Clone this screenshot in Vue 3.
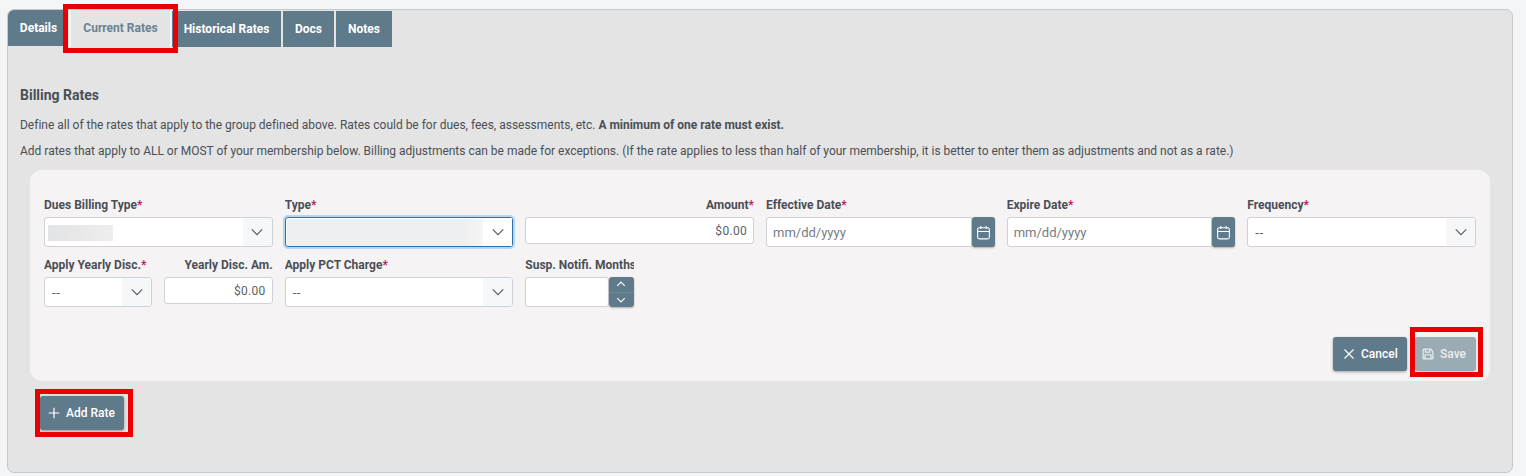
<script setup>
const tabs = [
  { name: 'Details', cls: 'first' },
  { name: 'Current Rates', cls: 'active' },
  { name: 'Historical Rates', cls: '' },
  { name: 'Docs', cls: '' },
  { name: 'Notes', cls: '' },
]
</script>

<template>
  <div class="page">
    <div class="panel">
      <div class="tabs">
        <div v-for="t in tabs" :key="t.name" class="tab" :class="t.cls">{{ t.name }}</div>
      </div>
      <div class="content">
        <h2 class="title">Billing Rates</h2>
        <p class="line one">Define all of the rates that apply to the group defined above. Rates could be for dues, fees, assessments, etc. <b>A minimum of one rate must exist.</b></p>
        <p class="line two">Add rates that apply to ALL or MOST of your membership below. Billing adjustments can be made for exceptions. (If the rate applies to less than half of your membership, it is better to enter them as adjustments and not as a rate.)</p>

        <div class="card">
          <div class="grid">
            <div class="field s2">
              <label>Dues Billing Type<i>*</i></label>
              <div class="select">
                <span class="value"><span class="blur small"></span></span>
                <span class="arrow"><svg viewBox="0 0 16 16"><path d="M2 5l6 6 6-6" /></svg></span>
              </div>
            </div>
            <div class="field s2">
              <label>Type<i>*</i></label>
              <div class="select focus">
                <span class="value nopad"><span class="blur full"></span></span>
                <span class="arrow white"><svg viewBox="0 0 16 16"><path d="M2 5l6 6 6-6" /></svg></span>
              </div>
            </div>
            <div class="field s2">
              <label class="right">Amount<i>*</i></label>
              <div class="input money">$0.00</div>
            </div>
            <div class="field s2">
              <label>Effective Date<i>*</i></label>
              <div class="date">
                <div class="input ph">mm/dd/yyyy</div>
                <span class="icon-btn">
                  <svg viewBox="0 0 16 16"><rect x="2.5" y="3.5" width="11" height="10.5" rx="1.5" /><path d="M2.5 7h11M5.5 1.8v3M10.5 1.8v3" /></svg>
                </span>
              </div>
            </div>
            <div class="field s2">
              <label>Expire Date<i>*</i></label>
              <div class="date">
                <div class="input ph">mm/dd/yyyy</div>
                <span class="icon-btn">
                  <svg viewBox="0 0 16 16"><rect x="2.5" y="3.5" width="11" height="10.5" rx="1.5" /><path d="M2.5 7h11M5.5 1.8v3M10.5 1.8v3" /></svg>
                </span>
              </div>
            </div>
            <div class="field s2">
              <label>Frequency<i>*</i></label>
              <div class="select">
                <span class="value">--</span>
                <span class="arrow"><svg viewBox="0 0 16 16"><path d="M2 5l6 6 6-6" /></svg></span>
              </div>
            </div>

            <div class="field">
              <label>Apply Yearly Disc.<i>*</i></label>
              <div class="select">
                <span class="value">--</span>
                <span class="arrow"><svg viewBox="0 0 16 16"><path d="M2 5l6 6 6-6" /></svg></span>
              </div>
            </div>
            <div class="field">
              <label class="right">Yearly Disc. Am.</label>
              <div class="input money">$0.00</div>
            </div>
            <div class="field s2">
              <label>Apply PCT Charge<i>*</i></label>
              <div class="select">
                <span class="value">--</span>
                <span class="arrow"><svg viewBox="0 0 16 16"><path d="M2 5l6 6 6-6" /></svg></span>
              </div>
            </div>
            <div class="field">
              <label>Susp. Notifi. Months</label>
              <div class="date">
                <div class="input"></div>
                <span class="stepper">
                  <span class="step"><svg viewBox="0 0 16 16"><path d="M3 10.5l5-5 5 5" /></svg></span>
                  <span class="step"><svg viewBox="0 0 16 16"><path d="M3 5.5l5 5 5-5" /></svg></span>
                </span>
              </div>
            </div>
          </div>

          <div class="actions">
            <button class="btn cancel">
              <svg viewBox="0 0 16 16"><path d="M2 2l12 12M14 2L2 14" /></svg>
              Cancel
            </button>
            <button class="btn save">
              <svg viewBox="0 0 16 16"><path d="M1.5 2.5a1 1 0 0 1 1-1h9l3 3v9a1 1 0 0 1-1 1h-11a1 1 0 0 1-1-1zM4.5 1.5v4h6v-4M4 14.5v-5.5h8v5.5" /></svg>
              Save
            </button>
          </div>
        </div>

        <button class="btn add">
          <svg viewBox="0 0 16 16"><path d="M8 1v14M1 8h14" /></svg>
          Add Rate
        </button>
      </div>
    </div>

    <div class="mark mark-tab"></div>
    <div class="mark mark-save"></div>
    <div class="mark mark-add"></div>
  </div>
</template>

<style scoped>
.page {
  position: relative;
  width: 1526px;
  height: 476px;
  box-sizing: border-box;
  padding: 9px 13px 3px 7px;
  background: #f4f5f7;
  font-family: Roboto, "Liberation Sans", sans-serif;
  font-size: 12px;
  color: #4a4f57;
  overflow: hidden;
}
.panel {
  box-sizing: border-box;
  height: 464px;
  background: #e4e4e4;
  border: 1px solid #c9c9c9;
  border-radius: 7px;
}
.tabs {
  display: flex;
  align-items: flex-start;
  height: 37px;
}
.tab {
  box-sizing: border-box;
  height: 36px;
  margin-top: 1px;
  margin-right: 2px;
  background: #5f7a8a;
  color: #fff;
  font-weight: 700;
  font-size: 12px;
  line-height: 37px;
  text-align: center;
  white-space: nowrap;
}
.tab:nth-child(3) { width: 109px; }
.tab:nth-child(4) { width: 51px; }
.tab:nth-child(5) { width: 56px; margin-right: 0; }
.tab.first {
  width: 58px;
  margin-top: 0;
  margin-right: 3px;
  padding-left: 3px;
  border-radius: 6px 0 0 0;
}
.tab.active {
  width: 103px;
  height: 37px;
  margin-top: 0;
  margin-right: 0;
  background: #e4e4e4;
  color: #6a8292;
  border-left: 2px solid #f4f5f7;
  border-right: 2px solid #f4f5f7;
}
.content {
  padding: 0 12px;
}
.title {
  margin: 38px 0 0;
  font-size: 14px;
  font-weight: 700;
  line-height: 20px;
  color: #4a4f57;
}
.line {
  margin: 0;
  font-size: 12px;
  line-height: 18px;
  letter-spacing: -0.008px;
  white-space: nowrap;
  color: #4a4f57;
}
.line b { font-weight: 700; }
.line.one { margin-top: 11px; }
.line.two { margin-top: 8px; }
.card {
  box-sizing: border-box;
  height: 211px;
  margin: 10px 10px 0;
  padding: 28px 14px 10px;
  background: #f5f3f4;
  border-radius: 12px;
  display: flex;
  flex-direction: column;
  justify-content: space-between;
}
.grid {
  display: grid;
  grid-template-columns: repeat(12, 1fr);
  column-gap: 12px;
  row-gap: 11px;
}
.field {
  min-width: 0;
  grid-column: span 1;
}
.field.s2 { grid-column: span 2; }
label {
  display: block;
  height: 14px;
  margin-bottom: 5px;
  font-size: 12px;
  font-weight: 700;
  line-height: 14px;
  white-space: nowrap;
  overflow: hidden;
  color: #4a4f57;
}
label.right { text-align: right; }
label i {
  font-style: normal;
  color: #c2185b;
}
.select {
  box-sizing: border-box;
  display: flex;
  height: 30px;
  background: #fff;
  border: 1px solid #ced2d8;
  border-radius: 3px;
  overflow: hidden;
}
.select.focus {
  border-color: #2f6ea8;
  box-shadow: 0 0 0 2px #b4d6f5;
  overflow: visible;
}
.value {
  flex: 1;
  display: flex;
  align-items: center;
  min-width: 0;
  padding: 1px 7px 0;
  font-size: 13px;
  color: #555b63;
  letter-spacing: 0.6px;
}
.value.nopad { padding: 1px 0 0 1px; }
.blur { display: block; }
.blur.small {
  width: 65px;
  height: 16px;
  margin-left: -4px;
  background: linear-gradient(90deg, #e2e3e4, #eeeeee);
}
.blur.full {
  width: 100%;
  height: 100%;
  background: linear-gradient(90deg, #eeeff0 90%, #f6f6f7);
}
.arrow {
  flex: none;
  width: 29px;
  display: flex;
  align-items: center;
  justify-content: center;
  background: #f6f7f8;
}
.arrow.white { background: #fff; }
.arrow svg {
  width: 14px;
  height: 14px;
}
.arrow path {
  fill: none;
  stroke: #555b63;
  stroke-width: 1.3;
}
.input {
  box-sizing: border-box;
  flex: 1;
  min-width: 0;
  height: 27px;
  background: #fff;
  border: 1px solid #ced2d8;
  border-radius: 3px;
  line-height: 27px;
  color: #5a5f66;
}
.input.money {
  padding-right: 6px;
  text-align: right;
  letter-spacing: 0.3px;
}
.date {
  display: flex;
  height: 30px;
}
.date .input { height: 30px; }
.input.ph {
  padding: 1px 0 0 6px;
  font-size: 13px;
  line-height: 28px;
  color: #757c85;
  border-radius: 3px 0 0 3px;
}
.icon-btn {
  flex: none;
  width: 23px;
  height: 30px;
  display: flex;
  align-items: center;
  justify-content: center;
  background: #5f7a8a;
  border-radius: 3px;
  box-shadow: 0 1px 2px rgba(0, 0, 0, 0.3);
}
.icon-btn svg {
  width: 17px;
  height: 17px;
}
.icon-btn rect,
.icon-btn path {
  fill: none;
  stroke: #fff;
  stroke-width: 1;
}
.stepper {
  flex: none;
  width: 25px;
  height: 30px;
  display: flex;
  flex-direction: column;
  border-radius: 3px;
  overflow: hidden;
  box-shadow: 0 1px 2px rgba(0, 0, 0, 0.3);
}
.step {
  flex: 1;
  display: flex;
  align-items: center;
  justify-content: center;
  background: #5f7a8a;
}
.step + .step { border-top: 1px solid #6f8896; }
.step svg {
  width: 12px;
  height: 12px;
}
.step path {
  fill: none;
  stroke: #fff;
  stroke-width: 1.6;
}
.actions {
  display: flex;
  justify-content: flex-end;
  gap: 8px;
}
.btn {
  box-sizing: border-box;
  display: flex;
  align-items: center;
  justify-content: flex-start;
  gap: 6px;
  height: 34px;
  padding: 0;
  border: 0;
  border-radius: 3px;
  background: #5f7a8a;
  color: #fff;
  font-family: inherit;
  font-size: 12px;
  font-weight: 500;
  white-space: nowrap;
  box-shadow: 0 1px 3px rgba(0, 0, 0, 0.35);
}
.btn svg {
  width: 12px;
  height: 12px;
}
.btn path {
  fill: none;
  stroke: currentColor;
  stroke-width: 1.6;
}
.cancel { width: 74px; padding-left: 10px; }
.save {
  width: 61px;
  padding-left: 7px;
  background: #9aabb4;
  color: #e8edf0;
  box-shadow: 0 1px 2px rgba(0, 0, 0, 0.2);
}
.add {
  width: 84px;
  padding-left: 8px;
  margin: 15px 0 0 20px;
}
.mark {
  position: absolute;
  box-sizing: border-box;
  border: 5px solid #ea0000;
  pointer-events: none;
}
.mark-tab {
  left: 63px;
  top: 4px;
  width: 115px;
  height: 49px;
}
.mark-save {
  left: 1410px;
  top: 327px;
  width: 73px;
  height: 50px;
}
.mark-add {
  left: 35px;
  top: 389px;
  width: 98px;
  height: 48px;
}
</style>
